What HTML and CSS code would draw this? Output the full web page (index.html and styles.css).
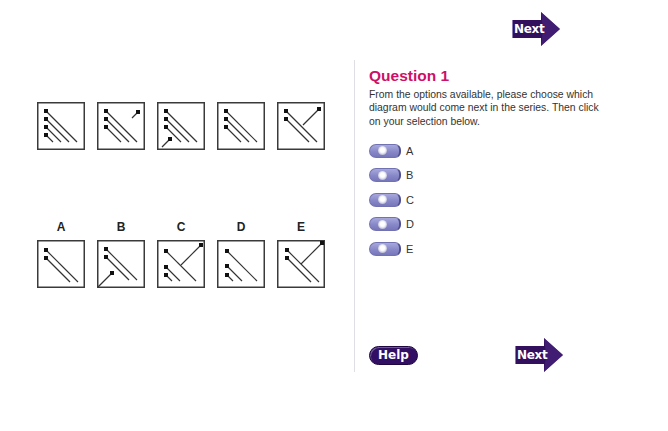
FILE: index.html
```html
<!DOCTYPE html>
<html>
<head>
<meta charset="utf-8">
<link rel="stylesheet" href="styles.css">
</head>
<body>
<div class="page">
  <div class="topbar">
    <a class="next">
      <svg class="next-shape" viewBox="0 0 48 34" width="48" height="34"><polygon points="0,8 29,8 29,0 48,17 29,34 29,26 0,26" fill="#33105e"/><polygon points="29,0 48,17 29,34 31,17" fill="#4a2680" opacity="0.6"/><line x1="0.5" y1="8" x2="0.5" y2="26" stroke="#8a7ab0"/></svg>
      <span class="next-text">Next</span>
    </a>
  </div>
  <div class="main">
    <div class="diagrams">
      <div class="row seq">
        <svg class="box" viewBox="0 0 48 48"><rect x="0.75" y="0.75" width="46.5" height="46.5" class="frame"/><g class="ln"><line x1="9" y1="9" x2="40" y2="40"/><line x1="9" y1="17" x2="32" y2="40"/><line x1="9" y1="25" x2="24" y2="40"/><line x1="9" y1="33" x2="16" y2="40"/></g><g class="sq"><rect x="7" y="7" width="4" height="4"/><rect x="7" y="15" width="4" height="4"/><rect x="7" y="23" width="4" height="4"/><rect x="7" y="31" width="4" height="4"/></g></svg>
        <svg class="box" viewBox="0 0 48 48"><rect x="0.75" y="0.75" width="46.5" height="46.5" class="frame"/><g class="ln"><line x1="9" y1="9" x2="40" y2="40"/><line x1="9" y1="17" x2="32" y2="40"/><line x1="9" y1="25" x2="24" y2="40"/><line x1="41" y1="10" x2="35" y2="16"/></g><g class="sq"><rect x="7" y="7" width="4" height="4"/><rect x="7" y="15" width="4" height="4"/><rect x="7" y="23" width="4" height="4"/><rect x="39" y="8" width="4" height="4"/></g></svg>
        <svg class="box" viewBox="0 0 48 48"><rect x="0.75" y="0.75" width="46.5" height="46.5" class="frame"/><g class="ln"><line x1="9" y1="9" x2="40" y2="40"/><line x1="9" y1="17" x2="32" y2="40"/><line x1="9" y1="25" x2="24" y2="40"/><line x1="13" y1="37" x2="5" y2="45"/></g><g class="sq"><rect x="7" y="7" width="4" height="4"/><rect x="7" y="15" width="4" height="4"/><rect x="7" y="23" width="4" height="4"/><rect x="11" y="35" width="4" height="4"/></g></svg>
        <svg class="box" viewBox="0 0 48 48"><rect x="0.75" y="0.75" width="46.5" height="46.5" class="frame"/><g class="ln"><line x1="9" y1="9" x2="40" y2="40"/><line x1="9" y1="17" x2="32" y2="40"/><line x1="9" y1="25" x2="24" y2="40"/></g><g class="sq"><rect x="7" y="7" width="4" height="4"/><rect x="7" y="15" width="4" height="4"/><rect x="7" y="23" width="4" height="4"/></g></svg>
        <svg class="box" viewBox="0 0 48 48"><rect x="0.75" y="0.75" width="46.5" height="46.5" class="frame"/><g class="ln"><line x1="9" y1="9" x2="40" y2="40"/><line x1="9" y1="17" x2="32" y2="40"/><line x1="42" y1="7" x2="26" y2="23"/></g><g class="sq"><rect x="7" y="7" width="4" height="4"/><rect x="7" y="15" width="4" height="4"/><rect x="40" y="5" width="4" height="4"/></g></svg>
      </div>
      <div class="row opts">
        <div class="opt"><div class="lbl">A</div>
          <svg class="box" viewBox="0 0 48 48"><rect x="0.75" y="0.75" width="46.5" height="46.5" class="frame"/><g class="ln"><line x1="9" y1="10" x2="41" y2="42"/><line x1="9" y1="18" x2="33" y2="42"/></g><g class="sq"><rect x="7" y="8" width="4" height="4"/><rect x="7" y="16" width="4" height="4"/></g></svg></div>
        <div class="opt"><div class="lbl">B</div>
          <svg class="box" viewBox="0 0 48 48"><rect x="0.75" y="0.75" width="46.5" height="46.5" class="frame"/><g class="ln"><line x1="9" y1="9" x2="40" y2="40"/><line x1="9" y1="17" x2="32" y2="40"/><line x1="15" y1="33" x2="1" y2="47"/></g><g class="sq"><rect x="7" y="7" width="4" height="4"/><rect x="7" y="15" width="4" height="4"/><rect x="13" y="31" width="4" height="4"/></g></svg></div>
        <div class="opt"><div class="lbl">C</div>
          <svg class="box" viewBox="0 0 48 48"><rect x="0.75" y="0.75" width="46.5" height="46.5" class="frame"/><g class="ln"><line x1="9" y1="11" x2="39" y2="41"/><line x1="44" y1="5" x2="24" y2="25"/><line x1="9" y1="27" x2="23" y2="41"/><line x1="9" y1="35" x2="15" y2="41"/></g><g class="sq"><rect x="7" y="9" width="4" height="4"/><rect x="42" y="3" width="4" height="4"/><rect x="7" y="25" width="4" height="4"/><rect x="7" y="33" width="4" height="4"/></g></svg></div>
        <div class="opt"><div class="lbl">D</div>
          <svg class="box" viewBox="0 0 48 48"><rect x="0.75" y="0.75" width="46.5" height="46.5" class="frame"/><g class="ln"><line x1="10" y1="11" x2="40" y2="41"/><line x1="10" y1="26" x2="25" y2="41"/><line x1="10" y1="35" x2="16" y2="41"/></g><g class="sq"><rect x="8" y="9" width="4" height="4"/><rect x="8" y="24" width="4" height="4"/><rect x="8" y="33" width="4" height="4"/></g></svg></div>
        <div class="opt"><div class="lbl">E</div>
          <svg class="box" viewBox="0 0 48 48"><rect x="0.75" y="0.75" width="46.5" height="46.5" class="frame"/><g class="ln"><line x1="10" y1="10" x2="42" y2="42"/><line x1="10" y1="18" x2="34" y2="42"/><line x1="45" y1="3" x2="24" y2="24"/></g><g class="sq"><rect x="8" y="8" width="4" height="4"/><rect x="8" y="16" width="4" height="4"/><rect x="43" y="1" width="4" height="4"/></g></svg></div>
      </div>
    </div>
    <div class="panel">
      <h1 class="title">Question 1</h1>
      <p class="desc">From the options available, please choose which diagram would come next in the series. Then click on your selection below.</p>
      <ul class="choices">
        <li class="choice"><span class="pill"><span class="dot"></span></span>A</li>
        <li class="choice"><span class="pill"><span class="dot"></span></span>B</li>
        <li class="choice"><span class="pill"><span class="dot"></span></span>C</li>
        <li class="choice"><span class="pill"><span class="dot"></span></span>D</li>
        <li class="choice"><span class="pill"><span class="dot"></span></span>E</li>
      </ul>
      <div class="actions">
        <a class="help">Help</a>
        <a class="next">
          <svg class="next-shape" viewBox="0 0 48 34" width="48" height="34"><polygon points="0,8 29,8 29,0 48,17 29,34 29,26 0,26" fill="#33105e"/><polygon points="29,0 48,17 29,34 31,17" fill="#4a2680" opacity="0.6"/><line x1="0.5" y1="8" x2="0.5" y2="26" stroke="#8a7ab0"/></svg>
          <span class="next-text">Next</span>
        </a>
      </div>
    </div>
  </div>
</div>
</body>
</html>
```
FILE: styles.css
```css
* { box-sizing: border-box; }
html, body { margin: 0; padding: 0; background: #fff; }
body { font-family: "Liberation Sans", Arial, sans-serif; color: #333; width: 668px; height: 431px; overflow: hidden; }

.topbar { display: flex; justify-content: flex-end; padding: 12px 108px 0 0; height: 60px; }

.next { position: relative; display: block; width: 48px; height: 34px; }
.next-shape { display: block; }
.next-text { position: absolute; left: 2px; top: 10px; font: bold 12px/14px "DejaVu Sans", Verdana, sans-serif; color: #fff; letter-spacing: -0.3px; }

.main { display: flex; }

.diagrams { width: 354px; padding: 42px 0 0 37px; }
.row { display: flex; gap: 12px; }
.box { display: block; width: 48px; height: 48px; }
.frame { fill: #fff; stroke: #3a3a3a; stroke-width: 1.5; }
.ln line { stroke: #333; stroke-width: 1.15; }
.sq rect { fill: #111; }

.opts { margin-top: 70px; }
.opt { display: flex; flex-direction: column; align-items: center; }
.lbl { font: bold 12px/14px "Liberation Sans", Arial, sans-serif; color: #222; margin-bottom: 6px; }

.panel { border-left: 1px solid #dedee6; height: 312px; padding: 7px 0 0 14px; width: 250px; display: flex; flex-direction: column; }
.title { margin: 0; font: bold 15.5px/18px "Liberation Sans", Arial, sans-serif; color: #cc1166; }
.desc { margin: 3px 0 0; font-size: 10.4px; line-height: 13.3px; color: #333; width: 230px; }

.choices { list-style: none; margin: 16px 0 0; padding: 0; display: flex; flex-direction: column; gap: 10.5px; }
.choice { display: flex; align-items: center; font-size: 11px; line-height: 14px; color: #333; }
.pill { position: relative; display: block; width: 32px; height: 14px; margin-right: 5px; border-radius: 7px 6px 6px 7px; background: linear-gradient(#a8a8de, #8888c8 55%, #7676ba); border: 1px solid #7272b2; border-right: 2px solid #50508f; }
.dot { position: absolute; left: 8px; top: 1.5px; width: 9px; height: 9px; border-radius: 50%; background: radial-gradient(circle at 50% 45%, #fff 0 2px, #eef0f8 3px, #c4c4da 4.5px); }

.actions { margin-top: auto; display: flex; align-items: center; justify-content: space-between; width: 194px; height: 34px; }
.help { display: block; width: 49px; height: 19px; border-radius: 10px; background: #330f63; border: 1px solid #1e0640; color: #fff; font: bold 12px/17px "DejaVu Sans", Verdana, sans-serif; text-align: center; box-shadow: inset 1px 1px 0 #6a5a96; }
```
